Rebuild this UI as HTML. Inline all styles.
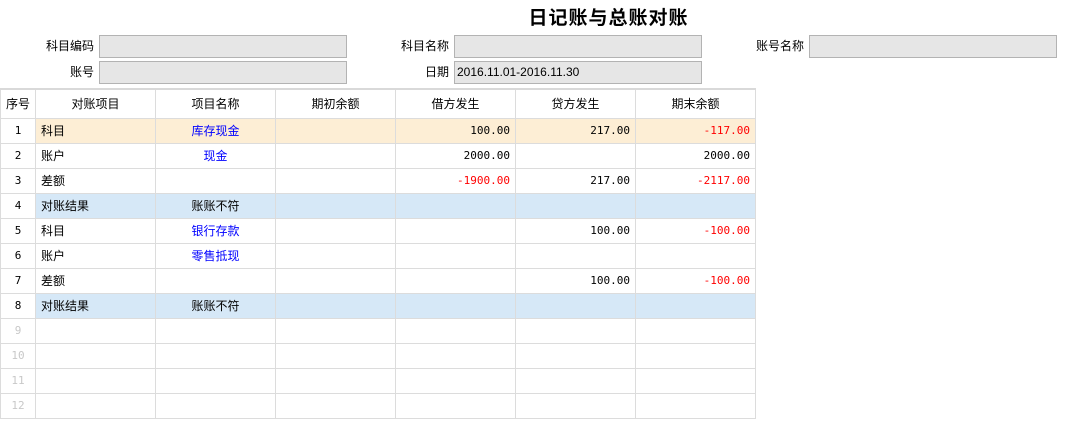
<!DOCTYPE html>
<html><head><meta charset="utf-8"><style>
*{margin:0;padding:0;box-sizing:border-box}
body{width:1073px;height:428px;background:#fff;font-family:"Liberation Sans","Noto Sans CJK SC",sans-serif;font-size:12px;color:#000;position:relative;overflow:hidden}
.t{position:absolute;left:0;top:3px;width:1217px;text-align:center;font-size:19px;font-weight:bold;letter-spacing:1px}
.l{position:absolute;width:90px;text-align:right;font-size:12px;line-height:22px}
.i{position:absolute;width:248px;height:23px;background:#e6e6e6;border:1px solid #b3b3b3;font-size:12px;line-height:21px;padding-left:2px}
table{position:absolute;left:0;top:88px;border-collapse:collapse;table-layout:fixed;border-top:2px solid #d9d9d9}
td{border:1px solid #dcdcdc;height:25px;padding:0 5px;white-space:nowrap;font-size:12px;line-height:12px}
tr.h td{height:29px;text-align:center}
.c{text-align:center}.r{text-align:right}
.b{color:#0000ff}.red{color:#ff0000}
.o td{background:#fdeed5}.o td:first-child,.bl td:first-child{background:#fff}
.bl td{background:#d6e8f7}
.g{color:#c8c8c8}
td:first-child{text-align:center;font-family:"DejaVu Sans Mono",monospace;font-size:11px}
.n{font-family:"DejaVu Sans Mono",monospace;font-size:11px}
</style></head><body>
<div class="t">日记账与总账对账</div>
<div class="l" style="left:4px;top:35px">科目编码</div>
<div class="i" style="left:99px;top:35px"></div>
<div class="l" style="left:4px;top:61px">账号</div>
<div class="i" style="left:99px;top:61px"></div>
<div class="l" style="left:359px;top:35px">科目名称</div>
<div class="i" style="left:454px;top:35px"></div>
<div class="l" style="left:359px;top:61px">日期</div>
<div class="i" style="left:454px;top:61px">2016.11.01-2016.11.30</div>
<div class="l" style="left:714px;top:35px">账号名称</div>
<div class="i" style="left:809px;top:35px"></div>
<table>
<colgroup><col style="width:35px"><col style="width:120px"><col style="width:120px"><col style="width:120px"><col style="width:120px"><col style="width:120px"><col style="width:120px"></colgroup>
<tr class="h"><td style="font-family:'Liberation Sans','Noto Sans CJK SC',sans-serif;font-size:12px">序号</td><td>对账项目</td><td>项目名称</td><td>期初余额</td><td>借方发生</td><td>贷方发生</td><td>期末余额</td></tr>
<tr class="o"><td>1</td><td>科目</td><td class="c b">库存现金</td><td></td><td class="r n">100.00</td><td class="r n">217.00</td><td class="r n red">-117.00</td></tr>
<tr><td>2</td><td>账户</td><td class="c b">现金</td><td></td><td class="r n">2000.00</td><td></td><td class="r n">2000.00</td></tr>
<tr><td>3</td><td>差额</td><td></td><td></td><td class="r n red">-1900.00</td><td class="r n">217.00</td><td class="r n red">-2117.00</td></tr>
<tr class="bl"><td>4</td><td>对账结果</td><td class="c">账账不符</td><td></td><td></td><td></td><td></td></tr>
<tr><td>5</td><td>科目</td><td class="c b">银行存款</td><td></td><td></td><td class="r n">100.00</td><td class="r n red">-100.00</td></tr>
<tr><td>6</td><td>账户</td><td class="c b">零售抵现</td><td></td><td></td><td></td><td></td></tr>
<tr><td>7</td><td>差额</td><td></td><td></td><td></td><td class="r n">100.00</td><td class="r n red">-100.00</td></tr>
<tr class="bl"><td>8</td><td>对账结果</td><td class="c">账账不符</td><td></td><td></td><td></td><td></td></tr>
<tr><td class="g">9</td><td></td><td></td><td></td><td></td><td></td><td></td></tr>
<tr><td class="g">10</td><td></td><td></td><td></td><td></td><td></td><td></td></tr>
<tr><td class="g">11</td><td></td><td></td><td></td><td></td><td></td><td></td></tr>
<tr><td class="g">12</td><td></td><td></td><td></td><td></td><td></td><td></td></tr>
</table>
</body></html>
